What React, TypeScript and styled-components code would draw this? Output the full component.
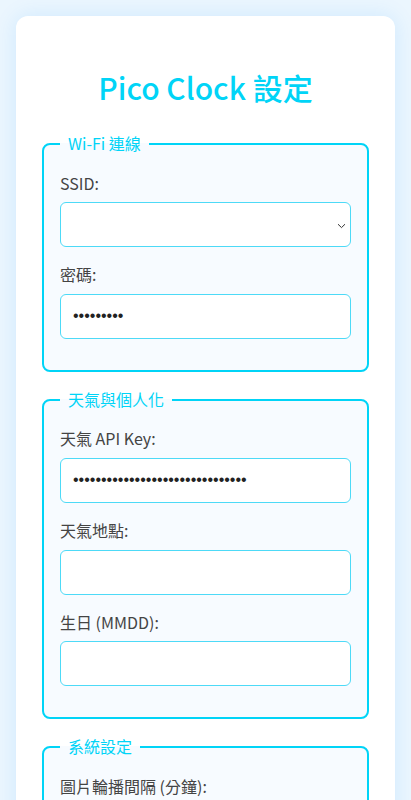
import React from "react";
import styled, { createGlobalStyle } from "styled-components";

const Global = createGlobalStyle`
  html, body {
    margin: 0;
    padding: 0;
  }
  body {
    background: #ebf6fe;
    font-family: "Noto Sans CJK TC", "Noto Sans", sans-serif;
    line-height: 1.6;
    color: #444;
  }
  * { box-sizing: border-box; }
`;

const Page = styled.div`
  padding: 16px;
`;

const Card = styled.div`
  max-width: 400px;
  margin: 0 auto;
  background: #ffffff;
  border-radius: 12px;
  padding: 24px;
  box-shadow: 0 0 22px rgba(0, 140, 255, 0.12);
`;

const Title = styled.h1`
  margin: 23px 0 20px;
  text-align: center;
  font-size: 30px;
  font-weight: 500;
  line-height: 48px;
  color: #00d4f7;
`;

const Section = styled.fieldset`
  margin: 0 2px 15px;
  padding: 14px 16px 16px;
  border: 2px solid #00d4f7;
  border-radius: 8px;
  background: #f7fbff;
  min-width: 0;
`;

const Legend = styled.legend`
  padding: 0 8px;
  font-size: 16px;
  line-height: 1.6;
  color: #00d4f7;
`;

const Group = styled.div`
  margin-bottom: 15px;
`;

const Label = styled.label`
  display: block;
  margin-bottom: 6px;
  font-size: 16px;
  line-height: 1.6;
  color: #444;
`;

const fieldCss = `
  display: block;
  width: 100%;
  height: 45px;
  padding: 0 12px;
  border: 1px solid #4ddaf7;
  border-radius: 6px;
  background: #ffffff;
  font-family: "Liberation Sans", Arial, sans-serif;
  font-size: 16px;
  color: #222;
  outline: none;
`;

const Input = styled.input`
  ${fieldCss}
`;

const SelectWrap = styled.div`
  position: relative;
`;

const Select = styled.select`
  ${fieldCss}
  appearance: none;
  -webkit-appearance: none;
  padding-right: 32px;
`;

const Chevron = styled.svg`
  position: absolute;
  right: 5px;
  top: 50%;
  width: 9px;
  height: 6px;
  margin-top: -2px;
  pointer-events: none;
`;

const SaveButton = styled.button`
  display: block;
  width: 100%;
  height: 48px;
  border: none;
  border-radius: 8px;
  background: #00d4f7;
  color: #fff;
  font-family: "Noto Sans CJK TC", "Noto Sans", sans-serif;
  font-size: 18px;
  font-weight: 700;
`;

type FieldProps = { label: string; type?: string; value?: string };

const Field = ({ label, type = "text", value = "" }: FieldProps) => (
  <Group>
    <Label>{label}</Label>
    <Input type={type} defaultValue={value} />
  </Group>
);

export default function App() {
  return (
    <>
      <Global />
      <Page>
        <Card>
          <Title>Pico Clock 設定</Title>

          <Section>
            <Legend>Wi-Fi 連線</Legend>
            <Group>
              <Label>SSID:</Label>
              <SelectWrap>
                <Select defaultValue="">
                  <option value=""></option>
                </Select>
                <Chevron viewBox="0 0 9 6">
                  <path
                    d="M1 1.2 L4.5 4.6 L8 1.2"
                    fill="none"
                    stroke="#333"
                    strokeWidth="1"
                  />
                </Chevron>
              </SelectWrap>
            </Group>
            <Field label="密碼:" type="password" value="123456789" />
          </Section>

          <Section>
            <Legend>天氣與個人化</Legend>
            <Field
              label="天氣 API Key:"
              type="password"
              value="abcdefghijklmnopqrstuvwxyz01234"
            />
            <Field label="天氣地點:" />
            <Field label="生日 (MMDD):" />
          </Section>

          <Section>
            <Legend>系統設定</Legend>
            <Field label="圖片輪播間隔 (分鐘):" value="5" />
          </Section>

          <SaveButton>儲存設定</SaveButton>
        </Card>
      </Page>
    </>
  );
}
